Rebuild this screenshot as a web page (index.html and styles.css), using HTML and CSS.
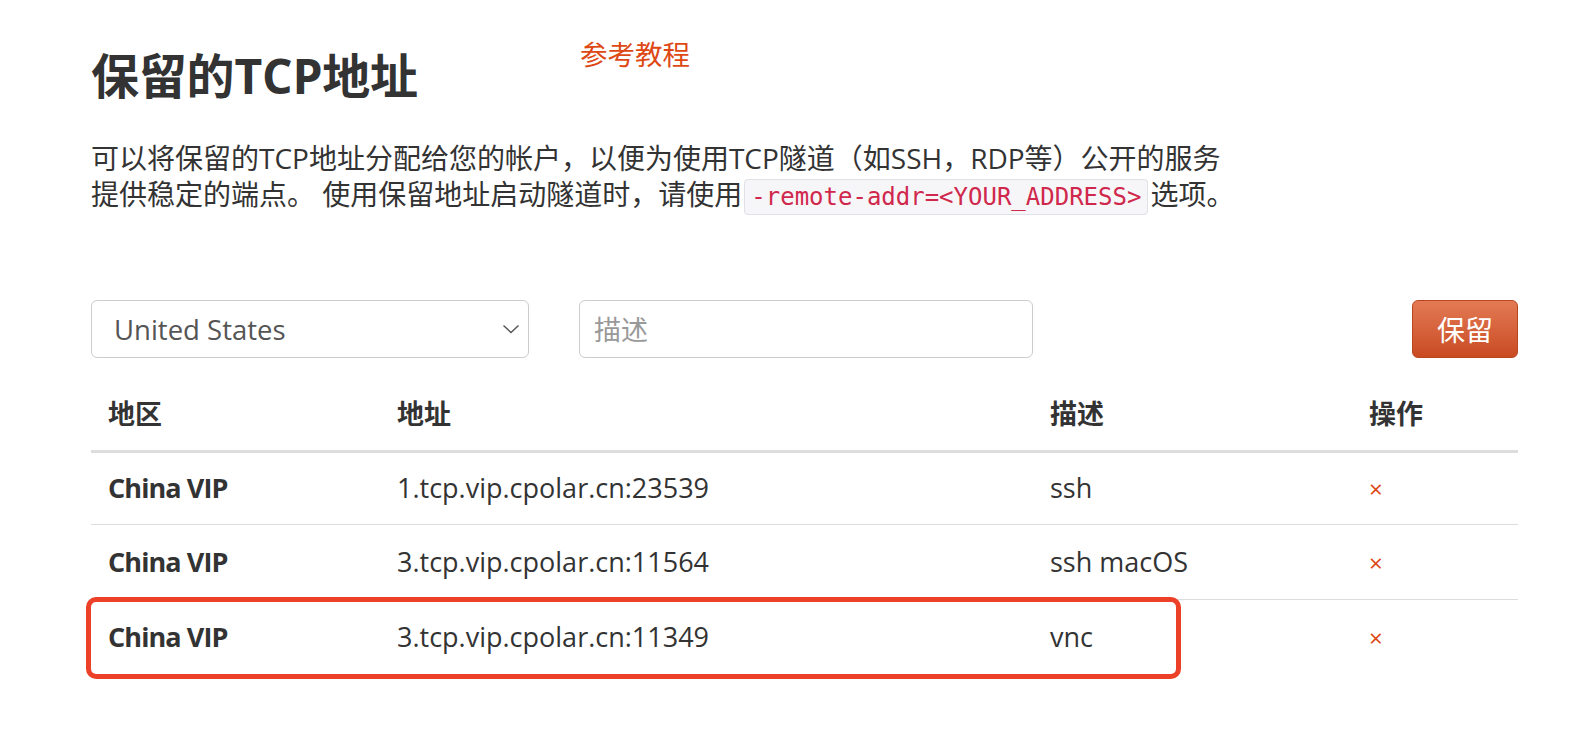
FILE: index.html
```html
<!DOCTYPE html>
<html lang="zh-CN">
<head>
<meta charset="utf-8">
<title>保留的TCP地址</title>
<link rel="stylesheet" href="styles.css">
</head>
<body>
<main class="page">
  <header class="head">
    <h1 class="title">保留的TCP地址</h1>
    <a class="guide" href="#">参考教程</a>
  </header>
  <p class="intro">可以将保留的TCP地址分配给您的帐户，以便为使用TCP隧道（如SSH，RDP等）公开的服务<br>提供稳定的端点。 使用保留地址启动隧道时，请使用<code class="code">-remote-addr=&lt;YOUR_ADDRESS&gt;</code>选项。</p>

  <form class="controls">
    <div class="select">
      <span>United States</span>
      <svg class="chev" width="18" height="10" viewBox="0 0 18 10"><path d="M1.5 1.5l7.5 7 7.5-7" fill="none" stroke="#555" stroke-width="1.4"/></svg>
    </div>
    <input class="desc" type="text" placeholder="描述">
    <button class="btn" type="button">保留</button>
  </form>

  <div class="table">
    <div class="row hrow">
      <div class="cell">地区</div>
      <div class="cell">地址</div>
      <div class="cell">描述</div>
      <div class="cell">操作</div>
    </div>
    <div class="row first">
      <div class="cell strong">China VIP</div>
      <div class="cell">1.tcp.vip.cpolar.cn:23539</div>
      <div class="cell">ssh</div>
      <div class="cell"><a class="del" href="#">×</a></div>
    </div>
    <div class="row">
      <div class="cell strong">China VIP</div>
      <div class="cell">3.tcp.vip.cpolar.cn:11564</div>
      <div class="cell">ssh macOS</div>
      <div class="cell"><a class="del" href="#">×</a></div>
    </div>
    <div class="row">
      <div class="cell strong">China VIP</div>
      <div class="cell">3.tcp.vip.cpolar.cn:11349</div>
      <div class="cell">vnc</div>
      <div class="cell"><a class="del" href="#">×</a></div>
    </div>
    <div class="mark"></div>
  </div>
</main>
</body>
</html>
```

FILE: styles.css
```css
html, body {
  margin: 0;
  padding: 0;
  background: #fff;
}
body {
  font-family: "Open Sans", "Noto Sans CJK SC", sans-serif;
  color: #333;
  font-size: 28px;
}
.page {
  width: 1427px;
  padding: 40px 0 60px 91px;
}
.head {
  display: flex;
  align-items: flex-start;
}
.title {
  margin: 8px 0 0 0;
  font-size: 48px;
  line-height: 56px;
  font-weight: 700;
  color: #333;
  letter-spacing: -0.2px;
  width: 489px;
}
.guide {
  color: #dd4814;
  text-decoration: none;
  font-size: 27.5px;
  line-height: 30px;
}
.intro {
  margin: 36px 0 0 0;
  line-height: 36px;
  font-size: 28px;
}
.code {
  font-family: "DejaVu Sans Mono", monospace;
  font-size: 24px;
  color: #d0284c;
  background: #f6f6f9;
  border: 1px solid #e1e1e8;
  border-radius: 4px;
  padding: 3px 6px;
  margin: 0 2px;
}
.controls {
  margin: 85px 0 0 0;
  display: flex;
  align-items: center;
}
.select {
  box-sizing: border-box;
  width: 438px;
  height: 58px;
  border: 1px solid #ccc;
  border-radius: 6px;
  display: flex;
  align-items: center;
  justify-content: space-between;
  padding: 0 8px 0 22px;
  color: #555;
  font-size: 27.5px;
}
.chev { display: block; }
.desc {
  box-sizing: border-box;
  margin-left: 50px;
  width: 454px;
  height: 58px;
  border: 1px solid #ccc;
  border-radius: 6px;
  padding: 0 14px;
  font-family: inherit;
  font-size: 27px;
  color: #555;
  outline: none;
}
.desc::placeholder { color: #999; }
.btn {
  margin-left: auto;
  box-sizing: border-box;
  width: 106px;
  height: 58px;
  border: 1px solid #b9461f;
  border-radius: 6px;
  background: linear-gradient(#e37a55, #c94b22);
  color: #fff;
  font-family: inherit;
  font-size: 28px;
  padding: 0;
}
.table {
  margin-top: 18px;
  position: relative;
  font-size: 27px;
}
.row {
  display: grid;
  grid-template-columns: 289px 653px 319px 166px;
  height: 74px;
  align-items: center;
  border-top: 1px solid #ddd;
}
.hrow {
  border-top: none;
  border-bottom: 3px solid #ddd;
  height: 74px;
  font-weight: 700;
}
.row.first {
  border-top: none;
  height: 71px;
}
.cell {
  padding-left: 17px;
  padding-bottom: 2px;
}
.strong {
  font-weight: 700;
  letter-spacing: -0.9px;
}
.del {
  color: #dd4814;
  text-decoration: none;
  font-size: 24px;
}
.mark {
  position: absolute;
  left: -5px;
  top: 221px;
  width: 1095px;
  height: 82px;
  box-sizing: border-box;
  border: 5px solid #ec4128;
  border-radius: 10px;
}
```
